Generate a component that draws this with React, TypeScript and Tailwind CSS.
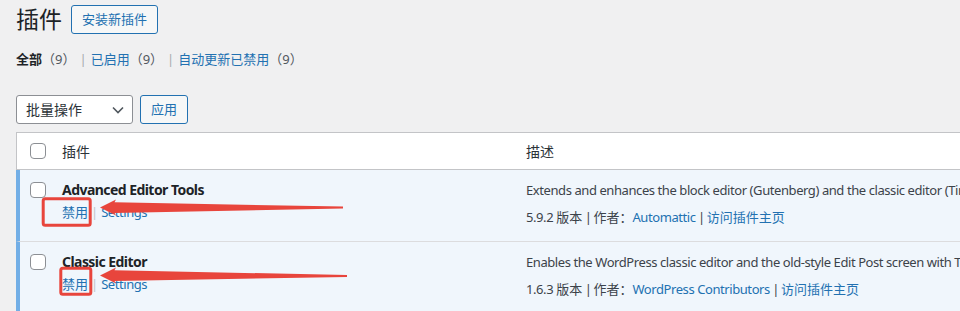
import React from 'react';

const FONT = '"Noto Sans", "Noto Sans CJK SC", sans-serif';

type Plugin = {
  name: string;
  desc: string;
  version: string;
  author: string;
};

const plugins: Plugin[] = [
  {
    name: 'Advanced Editor Tools',
    desc: 'Extends and enhances the block editor (Gutenberg) and the classic editor (TinyMCE).',
    version: '5.9.2',
    author: 'Automattic',
  },
  {
    name: 'Classic Editor',
    desc: 'Enables the WordPress classic editor and the old-style Edit Post screen with TinyMCE, Meta Boxes, etc.',
    version: '1.6.3',
    author: 'WordPress Contributors',
  },
];

const Checkbox = () => (
  <span className="block size-4 shrink-0 rounded-[4px] border border-[#8c8f94] bg-white" />
);

const PluginRow = ({ p }: { p: Plugin }) => (
  <div className="flex h-[72px] border-b border-l-4 border-b-[#dcdcde] border-l-[#72aee6] bg-[#f0f6fc]">
    <div className="w-[32px] shrink-0 pl-[10px] pt-[12px]">
      <Checkbox />
    </div>
    <div className="w-[464px] shrink-0 pl-[10px] pt-[10px]">
      <div className="text-[14px] font-bold leading-[20px] tracking-[-0.55px] text-[#1d2327]">{p.name}</div>
      <div className="mt-[2px] text-[13px] leading-[20px] text-[#2271b1]">
        禁用<span className="mx-[3px] text-[#c3c4c7]">|</span>
        <span className="tracking-[-0.45px]">Settings</span>
      </div>
    </div>
    <div className="min-w-0 flex-1 pl-[10px] pt-[10px] text-[13px] leading-[20px] text-[#3c434a]">
      <div className="whitespace-nowrap tracking-[-0.42px]">{p.desc}</div>
      <div className="mt-[7px] whitespace-nowrap">
        <span className="tracking-[-0.42px]">{p.version} </span>版本
        <span className="tracking-[-0.9px]"> | </span>作者：
        <span className="tracking-[-0.42px] text-[#2271b1]">{p.author}</span>
        <span className="tracking-[-0.9px]"> | </span>
        <span className="text-[#2271b1]">访问插件主页</span>
      </div>
    </div>
  </div>
);

export default function App() {
  return (
    <div
      className="relative h-[311px] w-[960px] overflow-hidden bg-[#f0f0f1] text-[#3c434a]"
      style={{ fontFamily: FONT }}
    >
      <div className="pl-4 pt-[5px]">
        {/* Title */}
        <div className="flex items-center gap-[9px]">
          <h1 className="text-[23px] leading-[29px] text-[#1d2327]">插件</h1>
          <button className="h-[29px] rounded-[3px] border border-[#2271b1] bg-[#f6f7f7] px-[10px] text-[13px] text-[#2271b1]">
            安装新插件
          </button>
        </div>

        {/* Filters */}
        <div className="mt-[15px] flex items-center text-[13px] leading-[20px]">
          <span className="font-bold text-[#1d2327]">全部</span>
          <span className="text-[#50575e]">（9）</span>
          <span className="mx-[4px] text-[#a7aaad]">|</span>
          <span className="text-[#2271b1]">已启用</span>
          <span className="text-[#50575e]">（9）</span>
          <span className="mx-[4px] text-[#a7aaad]">|</span>
          <span className="text-[#2271b1]">自动更新已禁用</span>
          <span className="text-[#50575e]">（9）</span>
        </div>

        {/* Bulk actions */}
        <div className="mt-[26px] flex gap-[7px]">
          <div className="flex h-[29px] w-[117px] items-center justify-between rounded-[3px] border border-[#8c8f94] bg-white pl-[9px] pr-[8px] text-[14px] text-[#2c3338]">
            <span>批量操作</span>
            <svg width="12" height="8" viewBox="0 0 12 8" fill="none">
              <path d="M1 1.5 6 6.5 11 1.5" stroke="#50575e" strokeWidth="1.6" />
            </svg>
          </div>
          <button className="h-[29px] w-[48px] rounded-[3px] border border-[#2271b1] bg-[#f6f7f7] text-[13px] text-[#2271b1]">
            应用
          </button>
        </div>

        {/* Table */}
        <div className="mt-[8px] w-[1200px]">
          <div className="flex h-[38px] items-center border border-[#c3c4c7] bg-white text-[14px] text-[#2c3338]">
            <div className="w-[35px] shrink-0 pl-[13px]">
              <Checkbox />
            </div>
            <div className="w-[464px] shrink-0 pl-[10px]">插件</div>
            <div className="flex-1 pl-[10px]">描述</div>
          </div>
          {plugins.map((p) => (
            <PluginRow key={p.name} p={p} />
          ))}
        </div>
      </div>

      {/* Red annotations */}
      <svg className="pointer-events-none absolute left-0 top-0" width="960" height="311">
        <rect x="43.2" y="198.8" width="47" height="26.4" rx="2" fill="none" stroke="#e8453c" strokeWidth="3" />
        <polygon
          points="100,207.5 116,199.5 114.5,202.3 343,206.6 343,208.6 114.5,213 116,215.5"
          fill="#e8453c"
        />
        <rect x="60.8" y="268.2" width="30" height="26" rx="2" fill="none" stroke="#e8453c" strokeWidth="3" />
        <polygon
          points="100,275.5 116,267.5 114.5,270.3 347,275 347,277 114.5,281 116,283.5"
          fill="#e8453c"
        />
      </svg>
    </div>
  );
}
